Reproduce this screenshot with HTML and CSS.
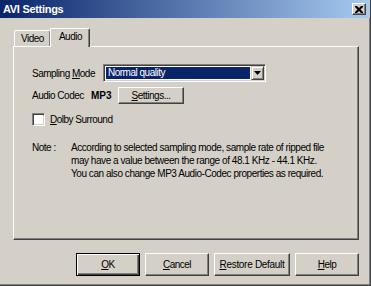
FILE: index.html
```html
<!DOCTYPE html>
<html lang="en">
<head>
    <meta charset="UTF-8">
    <title>AVI Settings</title>
    <link rel="stylesheet" href="styles.css">
</head>
<body>
    <div class="window">
        <div class="titlebar">
            <span class="title">AVI Settings</span>
            <button class="close-btn" aria-label="Close">
                <svg width="8" height="7" viewBox="0 0 8 7">
                    <path d="M0 0h2l2 2 2-2h2v1l-2.5 2.5L8 6v1H6L4 5 2 7H0V6l2.5-2.5L0 1z" fill="#000"/>
                </svg>
            </button>
        </div>

        <div class="content">
            <div class="tabs">
                <div class="tab">Video</div>
                <div class="tab active">Audio</div>
            </div>

            <div class="panel">
                <div class="row">
                    <span class="label">Sampling <u>M</u>ode</span>
                    <div class="combo">
                        <span class="combo-value">Normal quality</span>
                        <span class="combo-arrow">
                            <svg width="7" height="4" viewBox="0 0 7 4">
                                <path d="M0 0h7L3.5 4z" fill="#000"/>
                            </svg>
                        </span>
                    </div>
                </div>

                <div class="row codec-row">
                    <span class="codec-label">Audio Codec</span>
                    <strong class="codec-name">MP3</strong>
                    <button class="btn settings-btn"><u>S</u>ettings...</button>
                </div>

                <label class="check-row">
                    <span class="checkbox"></span>
                    <span><u>D</u>olby Surround</span>
                </label>

                <div class="note">
                    <span class="note-label">Note :</span>
                    <p class="note-text">According to selected sampling mode, sample rate of ripped file<br>
                        may have a value between the range of 48.1 KHz - 44.1 KHz.<br>
                        You can also change MP3 Audio-Codec properties as required.</p>
                </div>
            </div>

            <div class="actions">
                <button class="btn default-btn"><u>O</u>K</button>
                <button class="btn"><u>C</u>ancel</button>
                <button class="btn restore-btn"><u>R</u>estore Default</button>
                <button class="btn"><u>H</u>elp</button>
            </div>
        </div>
    </div>
</body>
</html>
```

FILE: styles.css
```css
body {
    margin: 0;
    padding: 0;
    background-color: #d4d0c8;
    font-family: "Liberation Sans", Arial, sans-serif;
    font-size: 10px;
    letter-spacing: -0.5px;
    white-space: nowrap;
    color: #000;
}

.window {
    width: 371px;
    height: 286px;
    box-sizing: border-box;
    border-right: 1px solid #404040;
    border-bottom: 1px solid #404040;
    box-shadow: inset -1px -1px 0 #808080;
}

.titlebar {
    height: 18px;
    display: flex;
    align-items: center;
    justify-content: space-between;
    padding: 0 4px 0 3px;
    background: linear-gradient(to right, #0a246a, #a6caf0);
}

.title {
    color: #fff;
    font-weight: bold;
    font-size: 11px;
    letter-spacing: -0.3px;
}

.close-btn {
    width: 14px;
    height: 12px;
    padding: 0;
    display: flex;
    align-items: center;
    justify-content: center;
    background-color: #d4d0c8;
    border: 1px solid;
    border-color: #fff #404040 #404040 #fff;
    box-shadow: inset -1px -1px 0 #808080;
}

.content {
    padding: 10px 11px 0 13px;
}

/* Tabs */
.tabs {
    display: flex;
    align-items: flex-end;
    height: 18px;
    padding-left: 1px;
}

.tab {
    height: 15px;
    padding: 0 6px;
    line-height: 16px;
    border: 1px solid;
    border-color: #fff #404040 transparent #fff;
    border-bottom: none;
    box-shadow: inset -1px 0 0 #808080;
    border-radius: 2px 2px 0 0;
}

.tab.active {
    height: 18px;
    line-height: 16px;
    padding: 0 7px 0 8px;
    margin-left: -1px;
    margin-bottom: -1px;
    position: relative;
    z-index: 1;
    background-color: #d4d0c8;
}

.panel {
    height: 194px;
    box-sizing: border-box;
    border: 1px solid;
    border-color: #fff #404040 #404040 #fff;
    box-shadow: inset -1px -1px 0 #808080;
    padding: 17px 18px 0 18px;
}

.row {
    display: flex;
    align-items: center;
}

.label {
    width: 71px;
}

/* Combo box */
.combo {
    width: 163px;
    height: 18px;
    box-sizing: border-box;
    display: flex;
    padding: 2px;
    border: 1px solid;
    border-color: #808080 #fff #fff #808080;
    box-shadow: inset 1px 1px 0 #404040, inset -1px -1px 0 #d4d0c8;
    background-color: #fff;
}

.combo-value {
    flex: 1;
    background-color: #0a246a;
    color: #fff;
    padding-left: 2px;
    line-height: 12px;
    margin-right: 1px;
}

.combo-arrow {
    width: 13px;
    box-sizing: border-box;
    margin: -1px -1px -1px 0;
    display: flex;
    align-items: center;
    justify-content: center;
    background-color: #d4d0c8;
    border: 1px solid;
    border-color: #d4d0c8 #404040 #404040 #d4d0c8;
    box-shadow: inset 1px 1px 0 #fff, inset -1px -1px 0 #808080;
}

.codec-row {
    margin-top: 5px;
}

.codec-label {
    width: 59px;
}

.codec-name {
    width: 27px;
    letter-spacing: 0;
}

/* Buttons */
.btn {
    font: inherit;
    letter-spacing: inherit;
    color: #000;
    background-color: #d4d0c8;
    border: 1px solid;
    border-color: #fff #404040 #404040 #fff;
    box-shadow: inset -1px -1px 0 #808080;
    padding: 0;
    height: 23px;
    width: 64px;
}

.settings-btn {
    width: 66px;
    height: 17px;
}

.check-row {
    display: flex;
    align-items: center;
    gap: 5px;
    margin-top: 9px;
}

.checkbox {
    width: 13px;
    height: 13px;
    box-sizing: border-box;
    background-color: #fff;
    border: 1px solid;
    border-color: #808080 #fff #fff #808080;
    box-shadow: inset 1px 1px 0 #404040, inset -1px -1px 0 #d4d0c8;
}

.note {
    display: flex;
    margin-top: 15px;
    line-height: 13px;
}

.note-label {
    width: 39px;
}

.note-text {
    margin: 0;
    letter-spacing: -0.45px;
}

.actions {
    display: flex;
    justify-content: flex-end;
    gap: 5px;
    margin-top: 13px;
}

.default-btn {
    border: 1px solid #000;
    box-shadow: inset 1px 1px 0 #fff, inset -1px -1px 0 #404040, inset -2px -2px 0 #808080;
}

.restore-btn {
    width: 76px;
    letter-spacing: -0.3px;
}
```
